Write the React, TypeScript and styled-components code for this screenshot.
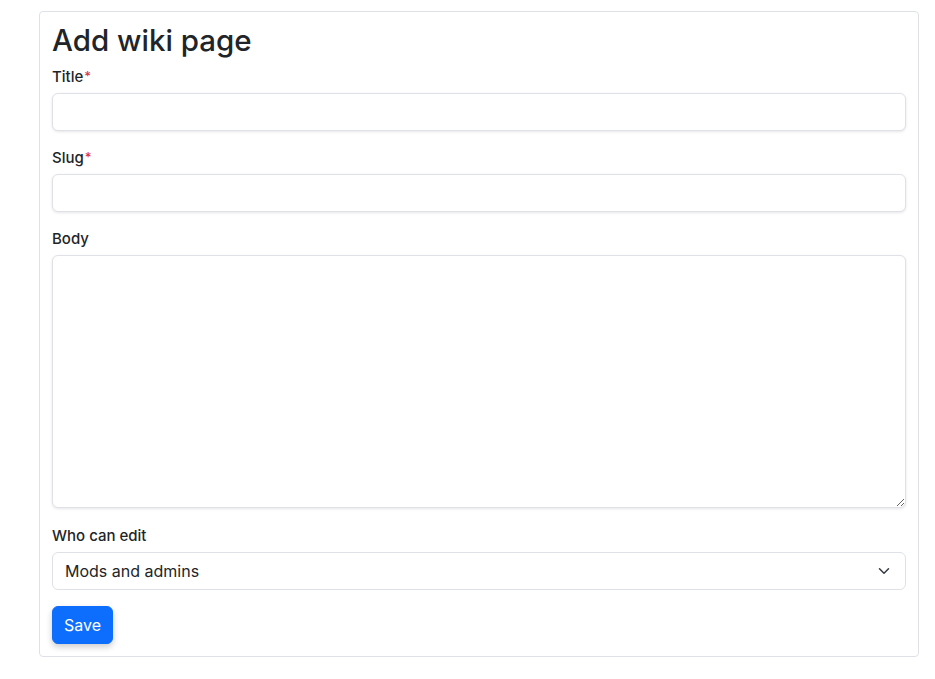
import React from "react";
import styled, { createGlobalStyle } from "styled-components";

const GlobalStyle = createGlobalStyle`
  html, body { margin: 0; padding: 0; background: #ffffff; }
  body {
    font-family: Inter, "Noto Sans", "Liberation Sans", sans-serif;
    color: #212529;
    font-size: 16px;
    line-height: 1.5;
  }
  * { box-sizing: border-box; }
`;

const Page = styled.div`
  padding: 11px 17px 20px 39px;
`;

const Card = styled.form`
  width: 880px;
  border: 1px solid #dee2e6;
  border-radius: 4px;
  padding: 11px 12px 12px 12px;
  display: flex;
  flex-direction: column;
  gap: 16px;
`;

const Heading = styled.h1`
  margin: 0 0 -8px 0;
  font-size: 29.5px;
  font-weight: 500;
  line-height: 1.2;
  color: #212529;
`;

const Field = styled.div<{ $extraTop?: number }>`
  display: flex;
  flex-direction: column;
  margin-top: ${(p) => p.$extraTop ?? 0}px;
`;

const Label = styled.label`
  font-size: 15px;
  font-weight: 500;
  line-height: 22.5px;
  margin-bottom: 4.5px;
  color: #212529;
`;

const Required = styled.span`
  color: #dc3545;
  font-size: 13px;
  margin-left: 1px;
  position: relative;
  top: -1px;
`;

const Input = styled.input`
  height: 38px;
  width: 100%;
  border: 1px solid #dee2e6;
  border-radius: 6px;
  box-shadow: 0 1px 3px rgba(0, 0, 0, 0.1);
  font: inherit;
  padding: 6px 12px;
  outline: none;
`;

const TextArea = styled.textarea`
  height: 253px;
  width: 100%;
  border: 1px solid #dee2e6;
  border-radius: 6px;
  box-shadow: 0 1px 3px rgba(0, 0, 0, 0.1);
  font: inherit;
  padding: 6px 12px;
  outline: none;
  resize: vertical;
  display: block;
`;

const SelectWrap = styled.div`
  position: relative;
  height: 38px;
`;

const Select = styled.select`
  appearance: none;
  width: 100%;
  height: 38px;
  border: 1px solid #dee2e6;
  border-radius: 6px;
  background: #fff;
  font: inherit;
  font-size: 16px;
  color: #212529;
  padding: 6px 36px 6px 12px;
  outline: none;
`;

const Chevron = styled.svg`
  position: absolute;
  right: 16px;
  top: 13px;
  pointer-events: none;
`;

const Button = styled.button`
  align-self: flex-start;
  height: 38px;
  padding: 0 11px;
  border: 1px solid #0d6efd;
  background: #0d6efd;
  color: #fff;
  border-radius: 6px;
  font: inherit;
  font-size: 16px;
  box-shadow: 0 3px 6px rgba(0, 0, 0, 0.2);
  cursor: pointer;
`;

export default function App() {
  return (
    <>
      <GlobalStyle />
      <Page>
        <Card onSubmit={(e) => e.preventDefault()}>
          <Heading>Add wiki page</Heading>
          <Field>
            <Label htmlFor="title">
              Title<Required>*</Required>
            </Label>
            <Input id="title" type="text" />
          </Field>
          <Field>
            <Label htmlFor="slug">
              Slug<Required>*</Required>
            </Label>
            <Input id="slug" type="text" />
          </Field>
          <Field>
            <Label htmlFor="body">Body</Label>
            <TextArea id="body" />
          </Field>
          <Field $extraTop={1}>
            <Label htmlFor="who">Who can edit</Label>
            <SelectWrap>
              <Select id="who" defaultValue="mods">
                <option value="mods">Mods and admins</option>
                <option value="admins">Admins only</option>
              </Select>
              <Chevron width="12" height="12" viewBox="0 0 16 16">
                <path
                  d="M2 5l6 6 6-6"
                  fill="none"
                  stroke="#343a40"
                  strokeWidth="2"
                  strokeLinecap="round"
                  strokeLinejoin="round"
                />
              </Chevron>
            </SelectWrap>
          </Field>
          <Button type="submit">Save</Button>
        </Card>
      </Page>
    </>
  );
}
